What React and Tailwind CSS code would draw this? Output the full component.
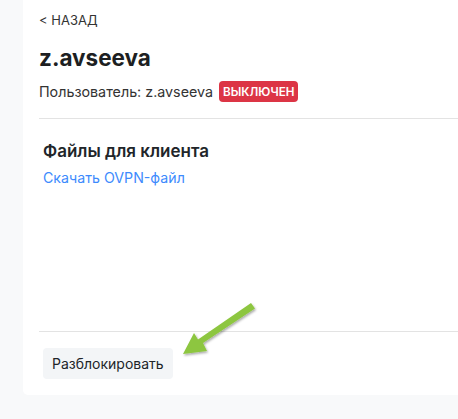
export default function App() {
  return (
    <div className="min-h-[419px] w-[458px] overflow-hidden bg-[#f8f9fa] pl-[23px] pb-[24px] relative" style={{ fontFamily: "Inter, 'Noto Sans', sans-serif" }}>
      <div className="w-[460px] h-[395px] bg-white rounded-bl-[5px] pl-[16px] flex flex-col">
        <div className="pt-[11px] text-[13px] text-[#333] leading-[18px]">&lt; НАЗАД</div>
        <h1 className="mt-[15px] text-[22.5px] font-bold text-[#1d1f22] leading-[28px]">z.avseeva</h1>
        <div className="mt-[9px] flex items-center text-[14.3px] text-[#333] leading-[20px]">
          <span>Пользователь: z.avseeva</span>
          <span className="ml-[6px] bg-[#dc3545] text-white font-semibold text-[11.7px] rounded-[4px] px-[4px] h-[21px] flex items-center">ВЫКЛЮЧЕН</span>
        </div>
        <div className="mt-[16px] border-t border-[#e3e3e3]" />
        <div className="pl-[4px]">
          <h2 className="mt-[20px] text-[17px] font-semibold text-[#212529] leading-[24px]">Файлы для клиента</h2>
          <a className="mt-[5px] block text-[14.2px] text-[#3d8bfd] leading-[20px]">Скачать OVPN-файл</a>
        </div>
        <div className="flex-1" />
        <div className="border-t border-[#e3e3e3]" />
        <div className="pl-[4px] pt-[16px] pb-[16px]">
          <button className="h-[31px] px-[9px] bg-[#f3f5f7] rounded-[4px] text-[14px] text-[#212529]">Разблокировать</button>
        </div>
      </div>
      <svg className="absolute left-[175px] top-[298px]" width="90" height="65" viewBox="0 0 90 65">
        <defs>
          <filter id="sh" x="-20%" y="-20%" width="140%" height="140%">
            <feDropShadow dx="1" dy="1.5" stdDeviation="1" floodColor="#000" floodOpacity="0.35" />
          </filter>
        </defs>
        <g filter="url(#sh)" fill="#8dc63f">
          <path d="M76 5 L80 10.5 L28 45 L32 53 L8 56 L19 35 L23 41.5 Z" />
        </g>
      </svg>
    </div>
  );
}
